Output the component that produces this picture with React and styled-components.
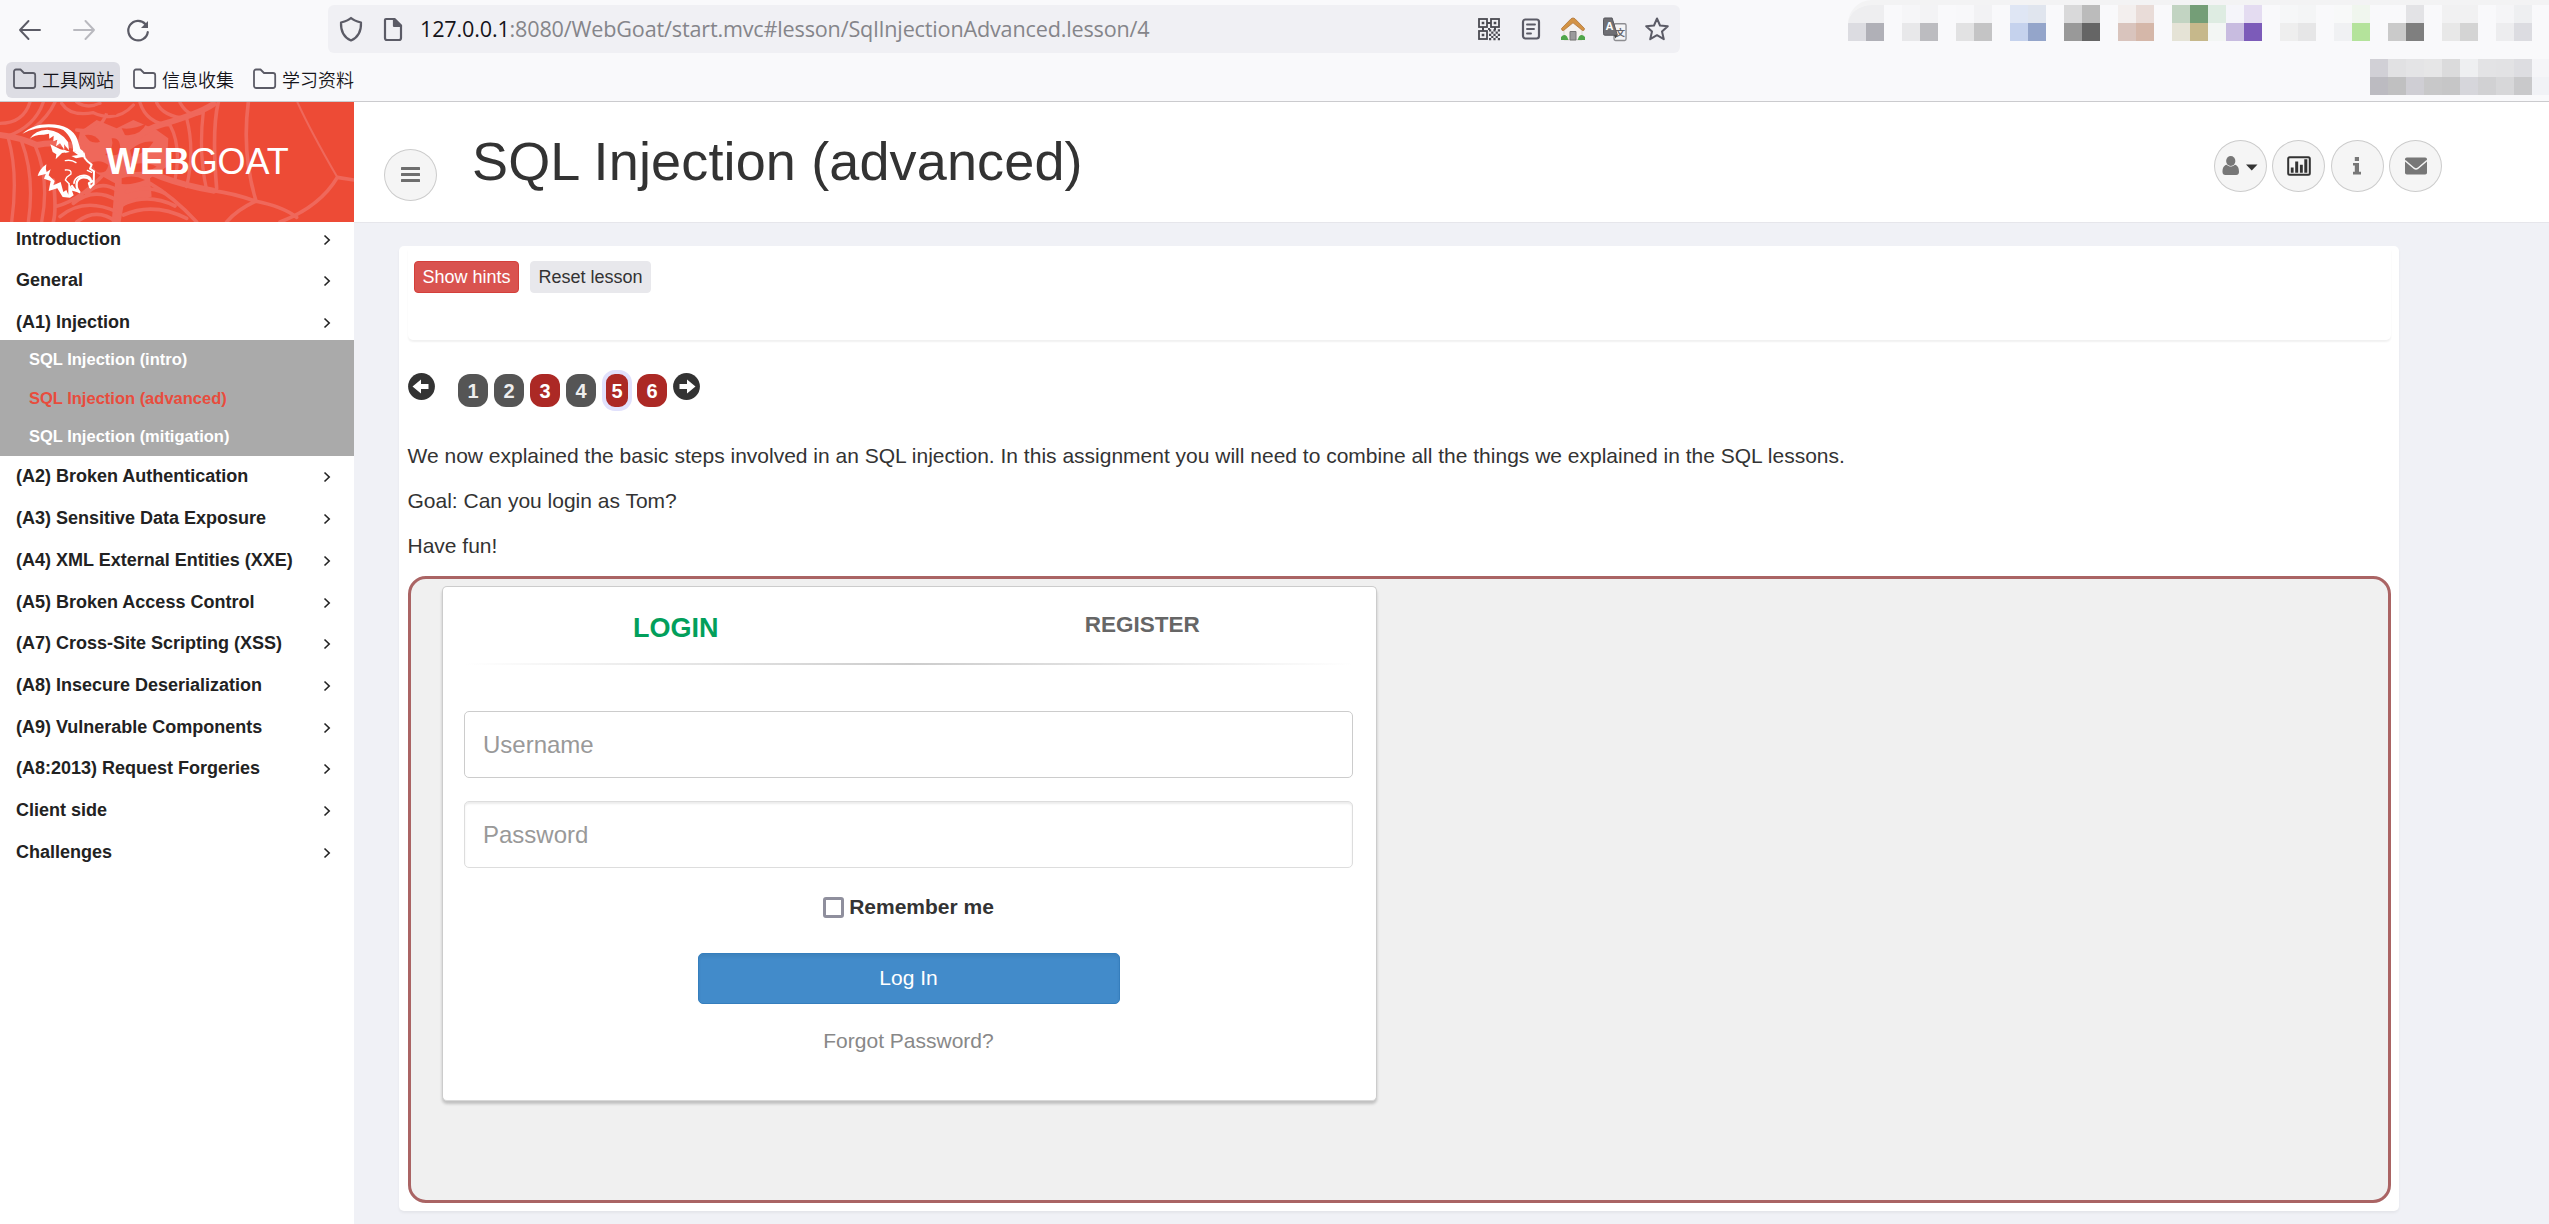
import React from 'react';
import styled, { createGlobalStyle, css } from 'styled-components';

const GlobalStyle = createGlobalStyle`
  *, *::before, *::after { box-sizing: border-box; }
  html, body { margin: 0; padding: 0; }
  body {
    background: #f0f1f6;
    color: #333;
    font-family: Arial, "Liberation Sans", "Noto Sans CJK SC", sans-serif;
    overflow: hidden;
  }
`;

const Window = styled.div`
  width: 2549px;
  height: 1224px;
  display: flex;
  flex-direction: column;
  overflow: hidden;
`;

/* ---------- browser chrome ---------- */

const Chrome = styled.div`
  flex: none;
  height: 102px;
  background: #f9f9fb;
  border-bottom: 1px solid #cbcbce;
`;

const NavRow = styled.div`
  display: flex;
  height: 59px;
`;

const NavButtons = styled.div`
  display: flex;
  width: 328px;
  padding: 18px 0 0 18px;
  gap: 30px;
`;

const UrlBar = styled.div`
  display: flex;
  align-items: center;
  width: 1352px;
  height: 48px;
  margin-top: 5px;
  padding: 0 11px 0 11px;
  border-radius: 6px;
  background: #f0f0f4;
`;

const UrlIcons = styled.div`
  display: flex;
  gap: 18px;
  width: 81px;
`;

const Url = styled.div`
  flex: 1;
  font: 21.6px/28px "Open Sans", "Noto Sans", sans-serif;
  letter-spacing: -0.17px;
  white-space: nowrap;
  color: #85858a;
  b { font-weight: 400; color: #15141a; }
`;

const UrlActions = styled.div`
  display: flex;
  gap: 18px;
`;

const BookmarkRow = styled.div`
  display: flex;
  align-items: flex-start;
  padding: 3px 0 0 6px;
  height: 42px;
`;

const Bookmark = styled.div`
  display: flex;
  align-items: center;
  width: 114px;
  height: 36px;
  margin-right: 6px;
  padding: 0 0 2px 6px;
  gap: 5px;
  border-radius: 6px;
  background: ${(p) => (p.$active ? '#dddde4' : 'transparent')};
  font: 18px/24px "Noto Sans CJK SC", sans-serif;
  font-weight: 350;
  color: #15141a;
  white-space: nowrap;
`;

const Mosaic = styled.div`
  display: grid;
  grid-template-columns: repeat(${(p) => p.$cols}, 18px);
  grid-auto-rows: 18px;
  overflow: hidden;
`;

const ExtensionMosaic = styled(Mosaic)`
  width: 701px;
  height: 41px;
  margin-left: 168px;
  border-top: 5px solid #f3f3f4;
  border-top-left-radius: 24px;
`;

const BookmarkMosaic = styled(Mosaic)`
  width: 179px;
  height: 36px;
  margin-left: auto;
  margin-top: -3px;
`;

const Tile = styled.span`
  background: ${(p) => p.$color};
`;

/* ---------- page frame ---------- */

const Page = styled.div`
  flex: 1;
  display: flex;
  min-height: 0;
`;

const Sidebar = styled.aside`
  flex: none;
  width: 354px;
  background: #fff;
`;

const Logo = styled.div`
  position: relative;
  height: 120px;
  padding: 40px 0 0 106px;
  background: #ed4b36;
  color: #fff;
  font-size: 36px;
  line-height: 40px;
  white-space: nowrap;
`;

const LogoArt = styled.svg`
  position: absolute;
  left: 0;
  top: 0;
`;

const LogoText = styled.span`
  position: relative;
  letter-spacing: -0.1px;
`;

const MenuItem = styled.div`
  display: flex;
  justify-content: space-between;
  height: 41.7px;
  padding: 10.5px 23px 0 16px;
  font-size: 18px;
  line-height: 20px;
  font-weight: 700;
  color: #222;
  ${(p) => p.$first && css`height: 37.75px; padding-top: 7px;`}
  ${(p) => p.$open && css`height: 38.5px;`}
  svg { margin-top: 5px; }
`;

const SubMenu = styled.div`
  height: 116px;
  background: #aaa;
`;

const SubItem = styled.div`
  height: 38.67px;
  padding: 10px 0 0 29px;
  font-size: 16.5px;
  line-height: 19px;
  font-weight: 700;
  color: ${(p) => (p.$active ? '#e84c3d' : '#fff')};
`;

const Main = styled.main`
  flex: 1;
  min-width: 0;
`;

const Header = styled.header`
  display: flex;
  align-items: flex-start;
  height: 121px;
  padding: 0 107px 0 30px;
  background: #fff;
  border-bottom: 1px solid #e6e6eb;
`;

const RoundButton = styled.div`
  display: flex;
  align-items: center;
  justify-content: center;
  width: 53px;
  height: 52px;
  border: 1px solid #ccc;
  border-radius: 50%;
  background: #f5f5f5;
`;

const MenuToggle = styled(RoundButton)`
  margin-top: 47px;
`;

const Title = styled.h1`
  margin: 29px 0 0 35px;
  font-size: 54px;
  line-height: 60px;
  font-weight: 400;
  letter-spacing: 0.14px;
  color: #333;
  white-space: nowrap;
`;

const HeaderActions = styled.div`
  display: flex;
  gap: 5.4px;
  margin: 38px 0 0 auto;
`;

/* ---------- lesson ---------- */

const Card = styled.section`
  width: 2000px;
  height: 965px;
  margin: 23px 0 0 45px;
  padding: 0 8px 8px 9px;
  border-radius: 5px;
  background: #fff;
  box-shadow: 0 2px 3px rgba(0, 0, 0, 0.05);
`;

const LessonTools = styled.div`
  display: flex;
  align-items: flex-start;
  gap: 11px;
  height: 94px;
  padding: 15px 6px 0;
  border-radius: 5px;
  box-shadow: 0 2px 2px rgba(0, 0, 0, 0.06);
`;

const ToolButton = styled.div`
  height: 32px;
  width: ${(p) => (p.$danger ? 105 : 121)}px;
  border: 1px solid ${(p) => (p.$danger ? '#d43f3a' : '#e8e8ec')};
  border-radius: 4px;
  background: ${(p) => (p.$danger ? '#d9534f' : '#e8e8ec')};
  color: ${(p) => (p.$danger ? '#fff' : '#333')};
  font-size: 18px;
  line-height: 30px;
  text-align: center;
  white-space: nowrap;
`;

const Pager = styled.div`
  display: flex;
  height: 41px;
  margin-top: 30px;
`;

const PagerArrow = styled.svg`
  display: block;
  margin-top: 3px;
  margin-right: ${(p) => (p.$prev ? 23 : 0)}px;
`;

const PageLink = styled.div`
  width: 30px;
  height: 33px;
  margin: 4px 6px 0 0;
  border-radius: 12px;
  background: ${(p) => (p.$red ? '#ac2925' : '#555')};
  color: ${(p) => (p.$red ? '#fff' : '#eee')};
  font-size: 20px;
  line-height: 35px;
  font-weight: 700;
  text-align: center;
  ${(p) => p.$current && css`
    height: 41px;
    margin-top: 0;
    margin-right: 5px;
    border: 4px solid #e1e1fc;
    border-radius: 13px;
  `}
`;

const LessonText = styled.div`
  margin-top: 30px;
  p {
    margin: 0 0 15px -0.5px;
    font-size: 21px;
    line-height: 30px;
  }
`;

const Attack = styled.div`
  height: 627px;
  padding: 7px 31px;
  border: 3px solid #aa6464;
  border-radius: 18px;
  background: #f0f0f0;
`;

const LoginPanel = styled.div`
  width: 935px;
  height: 515px;
  border: 1px solid #ccc;
  border-bottom-color: #d8d8d8;
  border-radius: 5px;
  background: #fff;
  box-shadow: 0 3px 3px rgba(0, 0, 0, 0.2);
`;

const Tabs = styled.div`
  display: flex;
  height: 76px;
`;

const Tab = styled.div`
  flex: 1;
  padding-top: ${(p) => (p.$active ? 25.5 : 23)}px;
  padding-right: 1px;
  font-size: ${(p) => (p.$active ? 27 : 22.5)}px;
  line-height: 30px;
  font-weight: 700;
  text-align: center;
  color: ${(p) => (p.$active ? '#029f5b' : '#666')};
`;

const Rule = styled.div`
  height: 2px;
  margin: 0 22px;
  background: linear-gradient(to right, #fff, #ccc 50%, #fff);
`;

const Form = styled.form`
  display: flex;
  flex-direction: column;
  align-items: center;
  padding: 46px 23px 0 21px;
`;

const Field = styled.input`
  width: 100%;
  height: 67px;
  margin: 0 0 23px;
  padding: 0 18px;
  border: 1px solid ${(p) => (p.$inset ? '#ddd' : '#ccc')};
  border-radius: 5px;
  background: #fff;
  box-shadow: ${(p) => (p.$inset ? 'inset 0 2px 2px rgba(0, 0, 0, 0.08)' : 'none')};
  font: 24px/30px Arial, "Liberation Sans", sans-serif;
  outline: none;
  &::placeholder { color: #999; opacity: 1; }
`;

const Remember = styled.label`
  display: flex;
  align-items: center;
  height: 30px;
  margin-top: 1px;
  gap: 5px;
  font-size: 21px;
  line-height: 30px;
  font-weight: 700;
`;

const Check = styled.span`
  width: 21px;
  height: 21px;
  border: 3px solid #8f8f9d;
  border-radius: 3px;
  background: #fff;
`;

const Submit = styled.div`
  width: 422px;
  height: 51px;
  margin-top: 31px;
  border: 1px solid #357ebd;
  border-radius: 5px;
  background: #428bca;
  box-shadow: inset 0 3px 3px rgba(0, 0, 0, 0.06);
  color: #fff;
  font-size: 21px;
  line-height: 47px;
  text-align: center;
`;

const Forgot = styled.div`
  margin-top: 22px;
  font-size: 21px;
  line-height: 30px;
  color: #888;
`;

/* ---------- icons ---------- */

const line = { fill: 'none', stroke: '#5b5b66', strokeWidth: 2.2, strokeLinecap: 'round', strokeLinejoin: 'round' };

const Arrow = ({ faded, flip }) => (
  <svg width="24" height="24" viewBox="0 0 24 24" {...line} strokeWidth="1.9" opacity={faded ? 0.4 : 1}>
    <path d={flip ? 'M2 12H22M13.5 3L22 12L13.5 21' : 'M22 12H2M10.500 3L2 12L10.500 21'} />
  </svg>
);

const Reload = () => (
  <svg width="24" height="26" viewBox="0 0 24 26" {...line}>
    <path d="M19.5 6.2A9.8 9.8 0 1 0 21.8 14" />
    <path d="M22 3V10H15Z" fill="#5b5b66" stroke="none" />
  </svg>
);

const Shield = () => (
  <svg width="24" height="26" viewBox="0 0 24 26" {...line}>
    <path d="M12 2C14 4 18 5.4 22 6.5C22.3 14 20 21 12 24.5C4 21 1.7 14 2 6.5C6 5.4 10 4 12 2Z" />
  </svg>
);

const Doc = () => (
  <svg width="24" height="26" viewBox="0 0 24 26" {...line}>
    <path d="M5 3H13.5L20 9.5V22A2 2 0 0 1 18 24H6A2 2 0 0 1 4 22V4A1 1 0 0 1 5 3Z" />
    <path d="M13 3L20 10H13Z" fill="#5b5b66" />
  </svg>
);

const Folder = () => (
  <svg width="25" height="24" viewBox="0 0 25 24" {...line} strokeWidth="1.8">
    <path d="M2 4.5A2 2 0 0 1 4 2.5H8.5L12 6H21A2.2 2.2 0 0 1 23.2 8.2V18.8A2.2 2.2 0 0 1 21 21H4.2A2.2 2.2 0 0 1 2 18.8Z" />
  </svg>
);

const Qr = () => (
  <svg width="24" height="26" viewBox="0 0 24 26" fill="none" stroke="#4a4a52">
    <g strokeWidth="1.8">
      <rect x="2" y="3" width="8" height="8" />
      <rect x="14" y="3" width="8" height="8" />
      <rect x="2" y="15" width="8" height="8" />
    </g>
    <g strokeWidth="2.2" strokeDasharray="2.2 2.2">
      <path d="M12 14.4H23" /><path d="M14.2 16.6H23" /><path d="M12 18.8H23" /><path d="M14.2 21H23" /><path d="M12 23.2H23" />
    </g>
    <path d="M10 7H14M6 11V15M12 12V14M18 11V14" strokeWidth="2" />
    <path d="M4.700 5.700h2.600v2.600H4.700zM16.700 5.700h2.600v2.600H16.700zM4.700 17.700h2.600v2.600H4.700z" fill="#4a4a52" stroke="none" />
  </svg>
);

const Reader = () => (
  <svg width="24" height="26" viewBox="0 0 24 26" {...line}>
    <rect x="4" y="3.5" width="16" height="19" rx="2.4" />
    <path d="M8 8.5H16M8 13H15M8 17.5H12" strokeWidth="1.9" />
  </svg>
);

const Home = () => (
  <svg width="24" height="26" viewBox="0 0 24 26">
    <path d="M3 13L12 5L21 13V24H3Z" fill="#f4f1ee" stroke="#cfc9c4" strokeWidth=".6" />
    <path d="M9 24V15.5H15V24Z" fill="#9b9b9b" stroke="#777" strokeWidth="1" />
    <path d="M0 21Q3 17.5 6 20.500L7.500 24H0Z M24 21Q21 17.5 18 20.500L16.500 24H24Z" fill="#4fa64a" />
    <path d="M0.500 12.500L10 2.800Q12 1 14 2.800L23.500 12.500Q23.500 15 21.500 14.500L12 6.800L2.500 14.500Q0.500 15 0.500 12.500Z" fill="#d39344" stroke="#b0753a" strokeWidth=".8" />
  </svg>
);

const Glyph = styled.text`
  font-family: "Liberation Sans", "Noto Sans CJK SC", sans-serif;
  font-weight: 700;
`;

const Translate = () => (
  <svg width="24" height="26" viewBox="0.500 0 25 26">
    <rect x="12" y="7.500" width="12.500" height="17.500" rx="1.500" fill="#f4f4f6" stroke="#8d8d91" strokeWidth="1.400" />
    <Glyph x="13.500" y="20" fontSize="10" fill="#66666c">文</Glyph>
    <path d="M2.500 1.500H10L15.500 19.500H2.500A1.500 1.500 0 0 1 1 18V3A1.500 1.500 0 0 1 2.500 1.500Z" fill="#6f6f74" stroke="#55555a" />
    <path d="M12 19.500H15.500L13.500 23Z" fill="#444" />
    <Glyph x="3" y="14.500" fontSize="11.500" fill="#fff">A</Glyph>
  </svg>
);

const Star = () => (
  <svg width="24" height="26" viewBox="0 0 24 26" {...line} strokeWidth="2">
    <path d="M12 2.500L15 9.500L22.800 10.200L17 15.600L18.800 23.200L12 19.200L5.200 23.200L7 15.600L1.200 10.200L9 9.500Z" />
  </svg>
);

const Chevron = () => (
  <svg width="8" height="12" viewBox="0 0 8 12" fill="none" stroke="#222" strokeWidth="1.600">
    <path d="M1.500 1.500L6.200 6L1.500 10.500" />
  </svg>
);

const Bars = () => (
  <svg width="19" height="16" viewBox="0 0 19 16" fill="#6e6e6e">
    <rect y="0" width="19" height="3" rx=".5" /><rect y="6" width="19" height="3" rx=".5" /><rect y="12" width="19" height="3" rx=".5" />
  </svg>
);

const User = () => (
  <svg width="36" height="20" viewBox="0 0 36 20">
    <path d="M4.600 8.800C1.500 9.500 0.500 12.500 0.500 16C0.500 18 1.700 19 3.300 19H14.200C15.800 19 17 18 17 16C17 12.500 16 9.500 12.900 8.800C10.300 11.200 7.200 11.200 4.600 8.800Z" fill="#777" />
    <ellipse cx="8.750" cy="5" rx="4.600" ry="4.900" fill="#777" />
    <path d="M24 8.500H35.500L29.750 14.500Z" fill="#333" />
  </svg>
);

const Chart = () => (
  <svg width="24" height="20" viewBox="0 0 24 20">
    <rect x="1.200" y="1.200" width="21.600" height="17.600" rx="1.500" fill="none" stroke="#333" strokeWidth="2" />
    <path d="M3.800 11.500H6.600V16.800H3.800zM8.200 5.500H11.200V16.800H8.200zM12.900 8.800H15.800V16.800H12.900zM17.300 3.300H20.300V16.800H17.300z" fill="#333" />
  </svg>
);

const Info = () => (
  <svg width="10" height="18" viewBox="0 0 10 18" fill="#777">
    <path d="M2.800 0H7V4H2.800ZM1 6H7V14.800H9V17.600H1V14.800H2.800V8.600H1Z" />
  </svg>
);

const Mail = () => (
  <svg width="22" height="18" viewBox="0 0 22 18">
    <rect x="0" y="0.500" width="22" height="17" rx="1.800" fill="#777" />
    <path d="M0 3.500L9 11.200Q11 12.600 13 11.200L22 3.500" fill="none" stroke="#f5f5f5" strokeWidth="1.500" />
  </svg>
);

const CircleArrow = ({ prev }) => (
  <PagerArrow $prev={prev} width="27" height="27" viewBox="0 0 27 27">
    <circle cx="13.500" cy="13.500" r="13.400" fill="#333" />
    <path
      d="M4.500 13.500L13 6.500V11H20.500V16H13V20.500Z"
      fill="#fff"
      transform={prev ? undefined : 'translate(27 0) scale(-1 1)'}
    />
  </PagerArrow>
);

const WebAndGoat = () => (
  <LogoArt width="354" height="120" viewBox="0 6 1062 360" preserveAspectRatio="none">
    <g fill="none" stroke="#ef685b" strokeLinecap="round">
      <path fill="#ef685b" stroke="none" d="M240 95L290 60L350 85L400 60L470 90L505 115L500 200L450 235L455 290L400 300L370 320L362 366H335L345 250L290 220L230 140Z" />
      <path strokeWidth="18" d="M0 105Q60 112 110 135Q180 120 260 150M640 12Q600 40 480 75Q400 100 370 170M370 170Q460 240 640 272" />
      <path strokeWidth="11" d="M640 272Q700 280 765 303Q850 320 890 352M1012 232L1062 240M1012 232Q960 320 840 366M655 6Q635 90 650 265M745 6Q725 160 768 303M768 303Q710 330 680 366M450 250Q520 290 590 366" />
      <path strokeWidth="6" d="M892 6Q930 90 1012 232" />
      <path strokeWidth="10" d="M90 6Q70 70 0 70M130 6Q105 80 20 110M165 6Q145 50 100 85M25 115Q55 220 35 366M65 125Q105 230 85 366M105 135Q150 240 125 366" />
      <path strokeWidth="10" d="M185 10Q210 50 280 38Q350 70 400 15M230 6Q260 28 300 10M230 90Q300 100 320 40M420 8Q440 70 510 75Q545 140 525 240M470 8Q490 50 560 55Q585 150 560 260M540 8Q570 60 610 35Q595 160 620 270" />
      <path strokeWidth="11" d="M380 275Q440 255 495 280M375 310Q450 280 525 318M370 345Q460 305 560 355M350 270Q300 240 260 280M350 300Q280 260 220 310M350 335Q250 290 180 350M350 366Q290 320 230 366M165 320Q250 300 340 190M160 366Q170 330 160 240" />
    </g>
    <g fill="#ed4b36">
      <path d="M285 20Q320 5 350 45Q315 45 285 20Z" />
      <path d="M335 115Q365 110 360 160Q345 170 315 165Q345 145 335 115Z" />
      <path d="M365 85Q400 90 440 70Q420 110 375 105Z" />
      <path d="M390 150Q425 120 460 125Q445 155 395 170Z" />
      <path d="M375 200Q430 180 470 200Q440 220 385 215Z" />
      <path d="M255 105Q285 100 300 125Q270 135 255 105Z" />
      <path d="M270 190Q300 175 325 195Q320 225 290 215Z" />
      <path d="M365 235Q400 222 435 240Q400 255 365 252Z" />
    </g>
    <g fill="#fff">
      <path d="M67 101C90 83 112 73 145 73C190 72 222 90 232 118L241 147L250 154L249 162L219 153C222 132 208 104 190 90C157 76 108 80 67 101Z" />
      <path d="M89 116Q105 91 142 89Q182 92 204 126L207 151L192 133L193 149L180 130L168 139L172 119L160 124L161 107L148 116L147 101L131 104Q105 103 89 116Z" />
      <path d="M151 133L181 148L209 155L186 159L180 165L167 178L169 163L158 156Z" />
      <path d="M188 148L209 156L196 158Z" />
      <path d="M217 152L250 160L256 172L244 172L228 175L214 168L234 165Z" />
    </g>
    <g fill="none" stroke="#fff" strokeLinejoin="round" strokeLinecap="round">
      <path strokeWidth="6" d="M251 160L254 174Q262 186 275 194L270 206L282 214L281 253L271 262" />
      <path strokeWidth="4" d="M196 182Q214 178 228 188M262 211L275 217" />
      <path strokeWidth="7" d="M271 262L267 250L277 244L264 234Q240 226 231 245Q226 262 238 276Q222 270 216 258" />
      <path strokeWidth="5" d="M272 236Q262 222 240 228Q222 236 222 250" />
      <path strokeWidth="4" d="M196 210Q216 208 213 222L200 232L196 240L208 252" />
    </g>
    <g fill="#fff">
      <path d="M139 193Q136 208 140 216L152 208L146 226L164 243L160 256L182 246L190 276L199 270L205 284L205 248L214 262L232 276L216 272L221 286L210 293L188 291L172 265L146 273L152 243L132 236L137 222L113 228Q119 207 139 193Z" />
    </g>
  </LogoArt>
);

/* ---------- data ---------- */

const B = 'transparent';
const extensionTiles = [
  '#eeeef0', '#eeeef0', B, '#f6f6f8', '#f3f3f5', B, '#f8f8fa', '#f2f2f4', B, '#dfe6f4', '#e0e5ee', B, '#d9d9da', '#bbbbbb', B,
  '#f3efee', '#e9dcd8', B, '#c2d4c2', '#749e77', '#deece2', '#f5f5fa', '#e4dcf1', B, '#f6f7f8', '#f4f5f6', B, '#f8f9f9', '#f0f6ee', B,
  '#f9f9fb', '#e3e3e6', B, '#f1f1f2', '#f1f1f2', B, '#f5f5f7', '#eeeff1', B,
  '#dcdce1', '#b0b0b7', B, '#e8e8ea', '#bcbcc0', B, '#e2e2e3', '#c4c4c5', B, '#c5d2ed', '#94a5ca', B, '#999999', '#656565', B,
  '#d9c4bd', '#d5b7a9', B, '#e5e3d6', '#c6b88b', '#f3f6f4', '#c8bce0', '#7c5bb9', B, '#eeeeee', '#e6e6e7', B, '#f0f1f3', '#b4e39b', B,
  '#cacaca', '#7f7f7f', B, '#e8e8e8', '#d4d4d4', B, '#ededef', '#dcdce1', B,
];
const bookmarkTiles = [
  '#d1d0d6', '#e1e1e3', '#e4e4e6', '#e6e6e7', '#dbdbdc', '#eeeff1', '#e3e3e5', '#e2e2e4', '#dddde1', '#f5f5f8',
  '#bcbbc1', '#c0c0c1', '#cfced4', '#c8c8c9', '#c6c6c7', '#d6d6db', '#d1d1d3', '#d7d7d9', '#c9c9cb', '#f1f2f6',
];

const bookmarks = ['工具网站', '信息收集', '学习资料'];

const menu = [
  { label: 'Introduction' },
  { label: 'General' },
  {
    label: '(A1) Injection',
    items: ['SQL Injection (intro)', 'SQL Injection (advanced)', 'SQL Injection (mitigation)'],
  },
  { label: '(A2) Broken Authentication' },
  { label: '(A3) Sensitive Data Exposure' },
  { label: '(A4) XML External Entities (XXE)' },
  { label: '(A5) Broken Access Control' },
  { label: '(A7) Cross-Site Scripting (XSS)' },
  { label: '(A8) Insecure Deserialization' },
  { label: '(A9) Vulnerable Components' },
  { label: '(A8:2013) Request Forgeries' },
  { label: 'Client side' },
  { label: 'Challenges' },
];

const pages = [
  { n: 1 }, { n: 2 }, { n: 3, red: true }, { n: 4 }, { n: 5, red: true, current: true }, { n: 6, red: true },
];

export default function App() {
  return (
    <Window>
      <GlobalStyle />
      <Chrome>
        <NavRow>
          <NavButtons>
            <Arrow />
            <Arrow flip faded />
            <Reload />
          </NavButtons>
          <UrlBar>
            <UrlIcons><Shield /><Doc /></UrlIcons>
            <Url><b>127.0.0.1</b>:8080/WebGoat/start.mvc#lesson/SqlInjectionAdvanced.lesson/4</Url>
            <UrlActions><Qr /><Reader /><Home /><Translate /><Star /></UrlActions>
          </UrlBar>
          <ExtensionMosaic $cols={39}>
            {extensionTiles.map((c, i) => <Tile key={i} $color={c} />)}
          </ExtensionMosaic>
        </NavRow>
        <BookmarkRow>
          {bookmarks.map((b, i) => <Bookmark key={b} $active={i === 0}><Folder />{b}</Bookmark>)}
          <BookmarkMosaic $cols={10}>
            {bookmarkTiles.map((c, i) => <Tile key={i} $color={c} />)}
          </BookmarkMosaic>
        </BookmarkRow>
      </Chrome>

      <Page>
        <Sidebar>
          <Logo>
            <WebAndGoat />
            <LogoText><b>WEB</b>GOAT</LogoText>
          </Logo>
          {menu.map((m, i) => (
            <React.Fragment key={m.label}>
              <MenuItem $first={i === 0} $open={Boolean(m.items)}>{m.label}<Chevron /></MenuItem>
              {m.items && (
                <SubMenu>
                  {m.items.map((s, j) => <SubItem key={s} $active={j === 1}>{s}</SubItem>)}
                </SubMenu>
              )}
            </React.Fragment>
          ))}
        </Sidebar>

        <Main>
          <Header>
            <MenuToggle><Bars /></MenuToggle>
            <Title>SQL Injection (advanced)</Title>
            <HeaderActions>
              <RoundButton><User /></RoundButton>
              <RoundButton><Chart /></RoundButton>
              <RoundButton><Info /></RoundButton>
              <RoundButton><Mail /></RoundButton>
            </HeaderActions>
          </Header>

          <Card>
            <LessonTools>
              <ToolButton $danger>Show hints</ToolButton>
              <ToolButton>Reset lesson</ToolButton>
            </LessonTools>
            <Pager>
              <CircleArrow prev />
              {pages.map((p) => (
                <PageLink key={p.n} $red={p.red} $current={p.current}>{p.n}</PageLink>
              ))}
              <CircleArrow />
            </Pager>
            <LessonText>
              <p>We now explained the basic steps involved in an SQL injection. In this assignment you will need to combine all the things we explained in the SQL lessons.</p>
              <p>Goal: Can you login as Tom?</p>
              <p>Have fun!</p>
            </LessonText>
            <Attack>
              <LoginPanel>
                <Tabs>
                  <Tab $active>LOGIN</Tab>
                  <Tab>REGISTER</Tab>
                </Tabs>
                <Rule />
                <Form>
                  <Field placeholder="Username" />
                  <Field $inset placeholder="Password" />
                  <Remember><Check />Remember me</Remember>
                  <Submit>Log In</Submit>
                  <Forgot>Forgot Password?</Forgot>
                </Form>
              </LoginPanel>
            </Attack>
          </Card>
        </Main>
      </Page>
    </Window>
  );
}
